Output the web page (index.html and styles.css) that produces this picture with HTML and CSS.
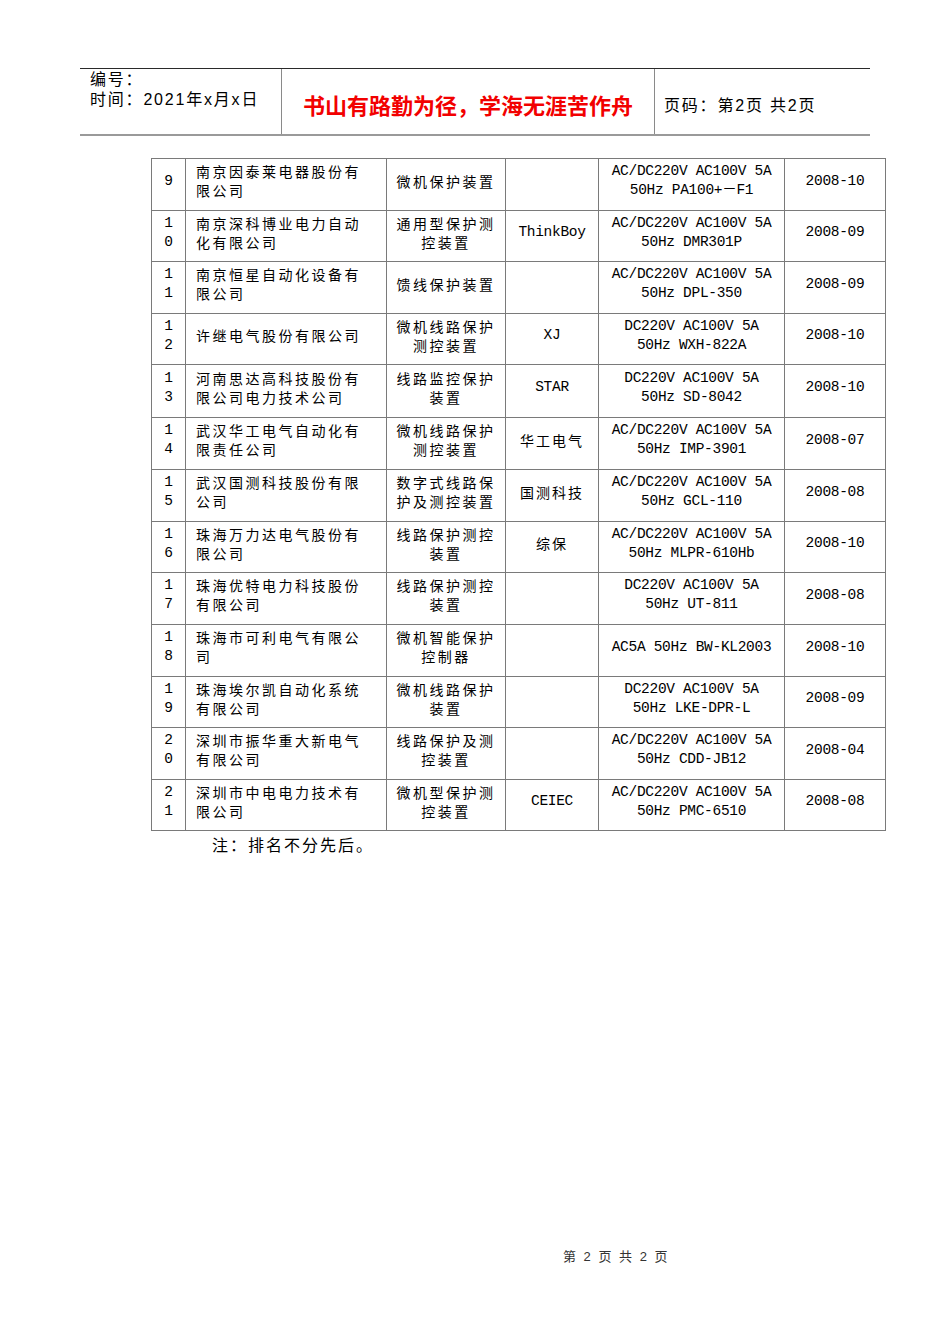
FILE: index.html
```html
<!DOCTYPE html>
<html lang="zh-CN">
<head>
<meta charset="utf-8">
<title>第2页</title>
<link rel="stylesheet" href="styles.css">
</head>
<body>
<div class="page">
  <div class="header">
    <div class="hcell hleft">
      <div>编号：</div>
      <div>时间：2021年x月x日</div>
    </div>
    <div class="hcell hmid">书山有路勤为径，学海无涯苦作舟</div>
    <div class="hcell hright">页码：第2页 共2页</div>
  </div>

  <table class="list">
    <colgroup>
      <col class="c-no"><col class="c-name"><col class="c-type"><col class="c-brand"><col class="c-spec"><col class="c-date">
    </colgroup>
    <tbody>
      <tr><td class="no">9</td><td class="name">南京因泰莱电器股份有限公司</td><td class="type">微机保护装置</td><td class="brand"></td><td class="spec">AC/DC220V AC100V 5A 50Hz PA100+－F1</td><td class="date">2008-10</td></tr>
      <tr><td class="no">1<br>0</td><td class="name">南京深科博业电力自动化有限公司</td><td class="type">通用型保护测控装置</td><td class="brand">ThinkBoy</td><td class="spec">AC/DC220V AC100V 5A 50Hz DMR301P</td><td class="date">2008-09</td></tr>
      <tr><td class="no">1<br>1</td><td class="name">南京恒星自动化设备有限公司</td><td class="type">馈线保护装置</td><td class="brand"></td><td class="spec">AC/DC220V AC100V 5A 50Hz DPL-350</td><td class="date">2008-09</td></tr>
      <tr><td class="no">1<br>2</td><td class="name">许继电气股份有限公司</td><td class="type">微机线路保护测控装置</td><td class="brand">XJ</td><td class="spec">DC220V AC100V 5A 50Hz WXH-822A</td><td class="date">2008-10</td></tr>
      <tr><td class="no">1<br>3</td><td class="name">河南思达高科技股份有限公司电力技术公司</td><td class="type">线路监控保护装置</td><td class="brand">STAR</td><td class="spec">DC220V AC100V 5A 50Hz SD-8042</td><td class="date">2008-10</td></tr>
      <tr><td class="no">1<br>4</td><td class="name">武汉华工电气自动化有限责任公司</td><td class="type">微机线路保护测控装置</td><td class="brand cn">华工电气</td><td class="spec">AC/DC220V AC100V 5A 50Hz IMP-3901</td><td class="date">2008-07</td></tr>
      <tr><td class="no">1<br>5</td><td class="name">武汉国测科技股份有限公司</td><td class="type">数字式线路保护及测控装置</td><td class="brand cn">国测科技</td><td class="spec">AC/DC220V AC100V 5A 50Hz GCL-110</td><td class="date">2008-08</td></tr>
      <tr><td class="no">1<br>6</td><td class="name">珠海万力达电气股份有限公司</td><td class="type">线路保护测控装置</td><td class="brand cn">综保</td><td class="spec">AC/DC220V AC100V 5A 50Hz MLPR-610Hb</td><td class="date">2008-10</td></tr>
      <tr><td class="no">1<br>7</td><td class="name">珠海优特电力科技股份有限公司</td><td class="type">线路保护测控装置</td><td class="brand"></td><td class="spec">DC220V AC100V 5A 50Hz UT-811</td><td class="date">2008-08</td></tr>
      <tr><td class="no">1<br>8</td><td class="name">珠海市可利电气有限公司</td><td class="type">微机智能保护控制器</td><td class="brand"></td><td class="spec">AC5A 50Hz BW-KL2003</td><td class="date">2008-10</td></tr>
      <tr><td class="no">1<br>9</td><td class="name">珠海埃尔凯自动化系统有限公司</td><td class="type">微机线路保护装置</td><td class="brand"></td><td class="spec">DC220V AC100V 5A 50Hz LKE-DPR-L</td><td class="date">2008-09</td></tr>
      <tr><td class="no">2<br>0</td><td class="name">深圳市振华重大新电气有限公司</td><td class="type">线路保护及测控装置</td><td class="brand"></td><td class="spec">AC/DC220V AC100V 5A 50Hz CDD-JB12</td><td class="date">2008-04</td></tr>
      <tr><td class="no">2<br>1</td><td class="name">深圳市中电电力技术有限公司</td><td class="type">微机型保护测控装置</td><td class="brand">CEIEC</td><td class="spec">AC/DC220V AC100V 5A 50Hz PMC-6510</td><td class="date">2008-08</td></tr>
    </tbody>
  </table>

  <p class="note">注：排名不分先后。</p>

  <div class="footer">第 2 页 共 2 页</div>
</div>
</body>
</html>
```

FILE: styles.css
```css
html, body {
  margin: 0;
  padding: 0;
  background: #ffffff;
}

.page {
  width: 950px;
  height: 1344px;
  padding-top: 68px;
  box-sizing: border-box;
  color: #000;
}

/* ---------- header ---------- */
.header {
  margin-left: 80px;
  width: 790px;
  height: 68px;
  box-sizing: border-box;
  border-top: 1px solid #2a2a2a;
  border-bottom: 2px solid #9a9a9a;
  display: flex;
  font-family: "Liberation Sans", "Noto Sans CJK SC", sans-serif;
}

.hcell {
  box-sizing: border-box;
}

.hleft {
  width: 201px;
  padding: 1px 0 0 10px;
  font-size: 16px;
  line-height: 20px;
  letter-spacing: 1.8px;
}

.hmid {
  width: 373px;
  border-left: 1px solid #8a8a8a;
  display: flex;
  align-items: center;
  justify-content: center;
  padding-top: 5px;
  color: #f20000;
  font-size: 22px;
  font-weight: 700;
  font-family: "Noto Sans CJK SC", sans-serif;
}

.hright {
  flex: 1;
  border-left: 1px solid #8a8a8a;
  display: flex;
  align-items: center;
  padding: 4px 0 0 9px;
  font-size: 16px;
  letter-spacing: 1.8px;
}

/* ---------- table ---------- */
.list {
  margin: 22px 0 0 151px;
  width: 734px;
  table-layout: fixed;
  border-collapse: collapse;
  border: 1px solid #333;
}

.c-no { width: 34px; }
.c-name { width: 201px; }
.c-type { width: 119px; }
.c-brand { width: 93px; }
.c-spec { width: 186px; }
.c-date { width: 101px; }

.list tr {
  height: 52px;
}

.list tr:nth-child(2),
.list tr:nth-child(4),
.list tr:nth-child(8),
.list tr:nth-child(11),
.list tr:nth-child(13) {
  height: 51px;
}

.list tr:nth-child(5) {
  height: 53px;
}

.list td {
  border: 1px solid #7a7a7a;
  padding: 2px 6px 9px;
  vertical-align: middle;
  line-height: 19px;
  box-sizing: border-box;
}

.no {
  text-align: center;
  font-family: "Liberation Mono", monospace;
  font-size: 14.5px;
}

.name {
  text-align: left;
  padding-left: 10px !important;
  padding-right: 16px !important;
  font-family: "Noto Sans CJK SC", sans-serif;
  font-size: 14px;
  letter-spacing: 2.5px;
}

.type {
  text-align: center;
  font-family: "Noto Sans CJK SC", sans-serif;
  font-size: 14px;
  letter-spacing: 2.5px;
}

.brand {
  text-align: center;
  font-family: "Liberation Mono", "Noto Sans CJK SC", monospace;
  font-size: 14.5px;
  letter-spacing: -0.3px;
}

.brand.cn {
  font-family: "Noto Sans CJK SC", sans-serif;
  font-size: 14px;
  letter-spacing: 2px;
}

.spec {
  text-align: center;
  padding-left: 8px !important;
  padding-right: 8px !important;
  font-family: "Liberation Mono", "Noto Sans CJK SC", monospace;
  font-size: 14.5px;
  letter-spacing: -0.3px;
}

.date {
  text-align: center;
  font-family: "Liberation Mono", monospace;
  font-size: 14.5px;
  letter-spacing: -0.3px;
}

/* ---------- note & footer ---------- */
.note {
  margin: 3px 0 0 212px;
  font-family: "Noto Sans CJK SC", sans-serif;
  font-size: 16px;
  line-height: 20px;
  letter-spacing: 2px;
}

.footer {
  margin-top: 395px;
  padding-left: 563px;
  font-family: "Liberation Sans", "Noto Sans CJK SC", sans-serif;
  font-size: 13px;
  line-height: 16px;
  letter-spacing: 2px;
  color: #333;
}
```
